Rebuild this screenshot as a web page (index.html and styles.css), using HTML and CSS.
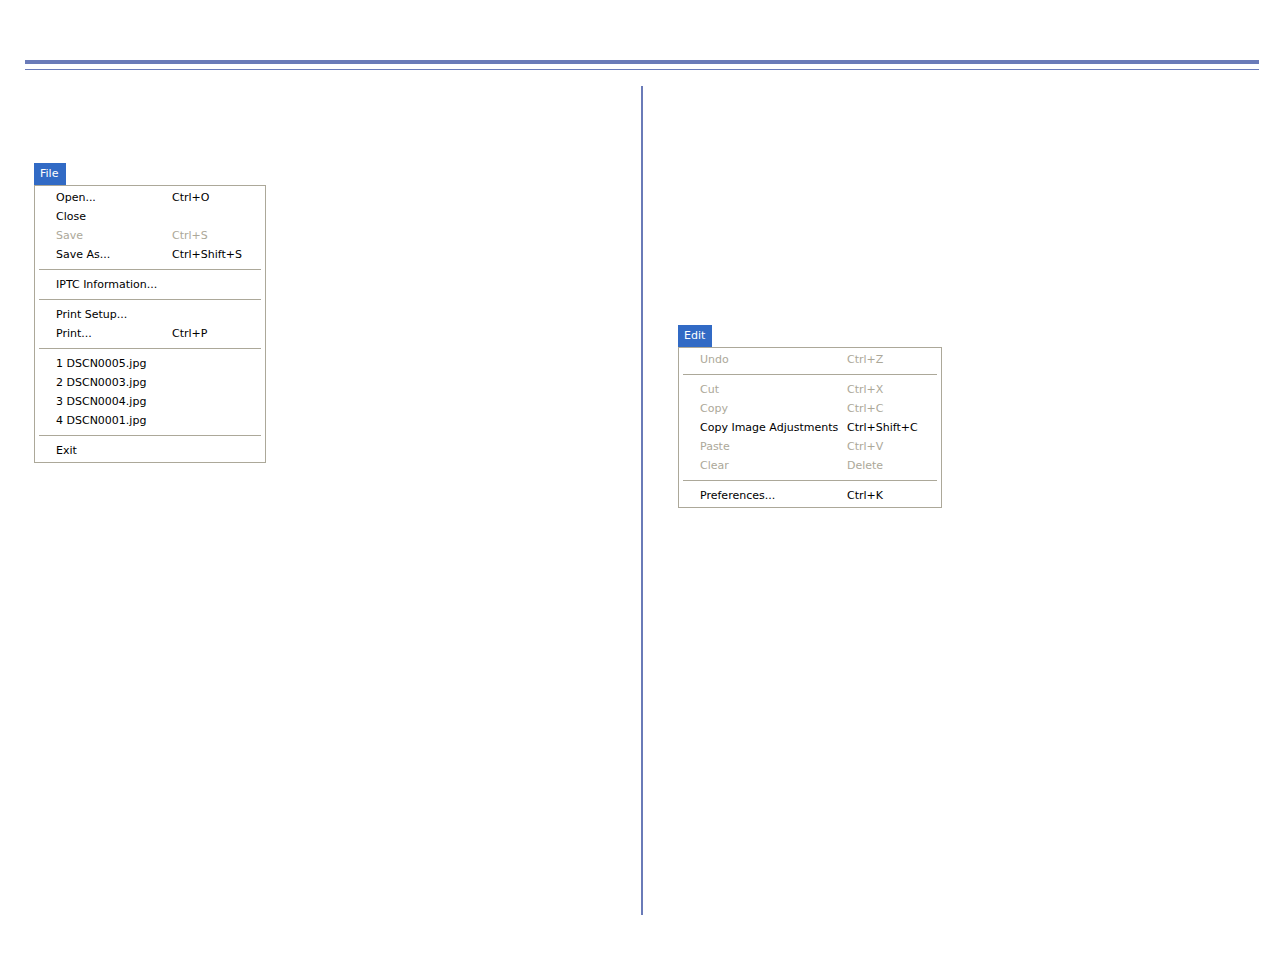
FILE: index.html
```html
<!DOCTYPE html>
<html>
<head>
<meta charset="utf-8">
<link rel="stylesheet" href="styles.css">
</head>
<body>
<div class="page">
  <div class="rule-thick"></div>
  <div class="rule-thin"></div>
  <div class="columns">
    <div class="col col-left">
      <div class="menu-wrap">
        <div class="menu-title title-file">File</div>
        <div class="menu menu-file">
          <div class="item"><span>Open...</span><span>Ctrl+O</span></div>
          <div class="item"><span>Close</span><span></span></div>
          <div class="item disabled"><span>Save</span><span>Ctrl+S</span></div>
          <div class="item"><span>Save As...</span><span>Ctrl+Shift+S</span></div>
          <div class="sep"></div>
          <div class="item"><span>IPTC Information...</span><span></span></div>
          <div class="sep"></div>
          <div class="item"><span>Print Setup...</span><span></span></div>
          <div class="item"><span>Print...</span><span>Ctrl+P</span></div>
          <div class="sep"></div>
          <div class="item"><span>1 DSCN0005.jpg</span><span></span></div>
          <div class="item"><span>2 DSCN0003.jpg</span><span></span></div>
          <div class="item"><span>3 DSCN0004.jpg</span><span></span></div>
          <div class="item"><span>4 DSCN0001.jpg</span><span></span></div>
          <div class="sep"></div>
          <div class="item"><span>Exit</span><span></span></div>
        </div>
      </div>
    </div>
    <div class="divider"></div>
    <div class="col col-right">
      <div class="menu-wrap">
        <div class="menu-title title-edit">Edit</div>
        <div class="menu menu-edit">
          <div class="item disabled"><span>Undo</span><span>Ctrl+Z</span></div>
          <div class="sep"></div>
          <div class="item disabled"><span>Cut</span><span>Ctrl+X</span></div>
          <div class="item disabled"><span>Copy</span><span>Ctrl+C</span></div>
          <div class="item"><span>Copy Image Adjustments</span><span>Ctrl+Shift+C</span></div>
          <div class="item disabled"><span>Paste</span><span>Ctrl+V</span></div>
          <div class="item disabled"><span>Clear</span><span>Delete</span></div>
          <div class="sep"></div>
          <div class="item"><span>Preferences...</span><span>Ctrl+K</span></div>
        </div>
      </div>
    </div>
  </div>
</div>
</body>
</html>
```
FILE: styles.css
```css
html, body {
  margin: 0;
  padding: 0;
  background: #ffffff;
}
.page {
  padding-top: 60px;
  padding-left: 25px;
  width: 1234px;
}
.rule-thick {
  height: 4px;
  background: #6a7bb8;
}
.rule-thin {
  margin-top: 5px;
  height: 1px;
  background: #6a7bb8;
}
.columns {
  margin-top: 16px;
  display: flex;
  height: 829px;
}
.col-left {
  width: 616px;
  padding: 77px 0 0 9px;
  box-sizing: border-box;
}
.divider {
  width: 2px;
  background: #6a7bb8;
}
.col-right {
  padding: 239px 0 0 35px;
}
.menu-wrap {
  font-family: "DejaVu Sans", "Liberation Sans", sans-serif;
  font-size: 11px;
  color: #000;
}
.menu-title {
  height: 22px;
  line-height: 21px;
  background: #316ac5;
  color: #fff;
  padding-left: 6px;
  box-sizing: border-box;
}
.title-file { width: 32px; }
.title-edit { width: 34px; }
.menu {
  border: 1px solid #aca899;
  padding: 2px 0;
  box-sizing: border-box;
  background: #fff;
}
.menu-file { width: 232px; }
.menu-edit { width: 264px; }
.item {
  display: grid;
  height: 19px;
  line-height: 19px;
  padding-left: 21px;
  white-space: nowrap;
}
.menu-file .item { grid-template-columns: 116px auto; }
.menu-edit .item { grid-template-columns: 147px auto; }
.item.disabled { color: #aca899; }
.sep {
  height: 1px;
  margin: 5px 4px;
  background: #aca899;
}
```
